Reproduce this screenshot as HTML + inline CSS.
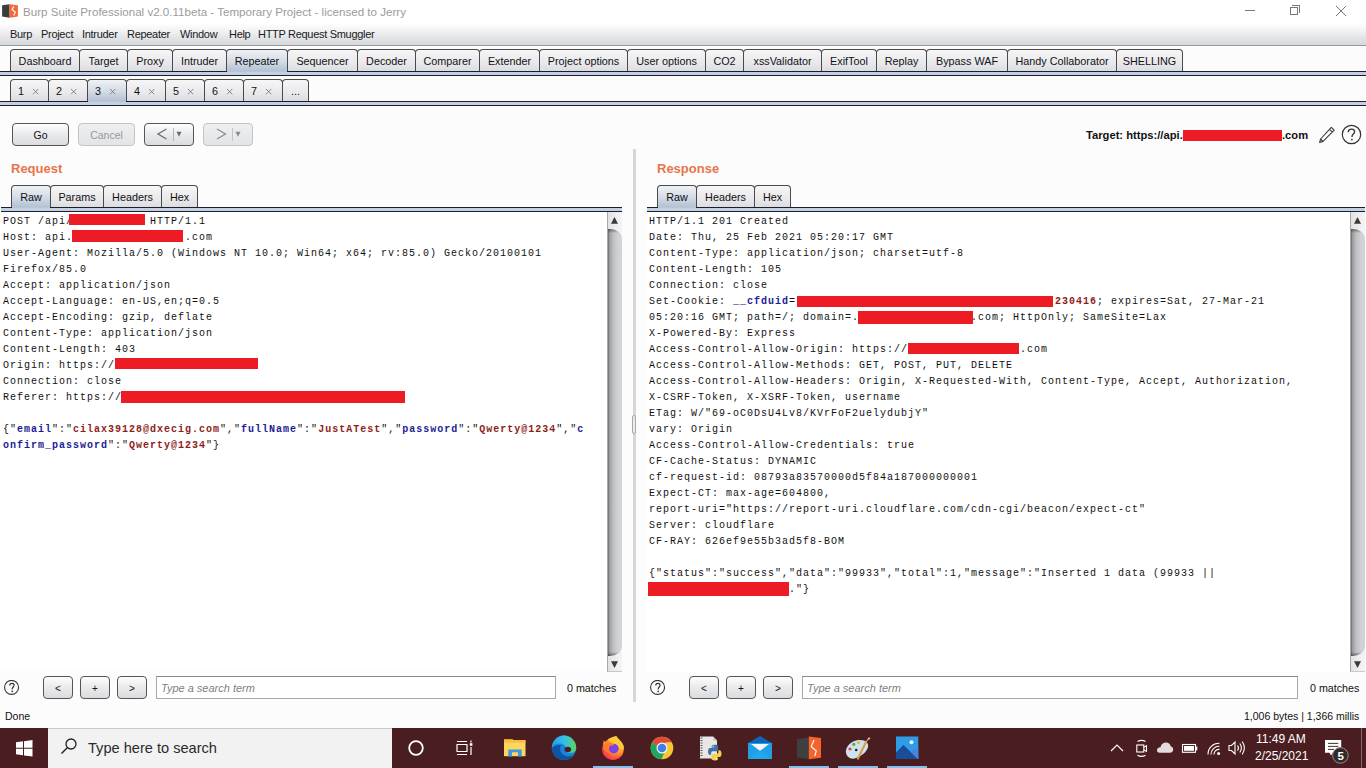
<!DOCTYPE html><html><head><meta charset="utf-8"><style>
*{box-sizing:border-box;margin:0;padding:0}
html,body{width:1366px;height:768px;overflow:hidden;background:#fcfcfc;font-family:"Liberation Sans",sans-serif;position:relative}
.a{position:absolute}
.t{position:absolute;white-space:pre;line-height:1}
#title{left:0;top:0;width:1366px;height:21px;background:#fff}
#menu{left:0;top:21px;width:1366px;height:25px;background:linear-gradient(#fff 0%,#fff 10%,#f4f5f6 35%,#e3e5e8 68%,#d5d8dd 100%);border-bottom:1px solid #9a9a9a}
.mi{position:absolute;top:28px;font-size:11px;letter-spacing:-0.3px;color:#1a1a1a;white-space:pre;line-height:12px}
.tab{position:absolute;border:1px solid #4a4a4a;border-bottom:none;border-radius:4px 4px 0 0;background:linear-gradient(#f6f6f7,#e9e9ec 60%,#dcdde1);font-size:10.8px;color:#111;text-align:center;white-space:pre}
.tab.sel{background:linear-gradient(#f0f2f5,#d3dbe5 55%,#b3c2d4);}
.band{position:absolute;left:0;width:1366px;background:#c3d0e4;border-top:1px solid #1b1f2b;border-bottom:1px solid #1b1f2b}
.btn{position:absolute;border:1px solid #555;border-radius:4px;background:linear-gradient(#fdfdfd,#e9eaec 50%,#dadcdf);font-size:10.5px;text-align:center;color:#111}
.btn.dis{border-color:#c4c4c4;background:linear-gradient(#eeeff0,#e3e4e6);color:#9a9a9a}
.mono{position:absolute;font-family:"Liberation Mono",monospace;font-size:10px;letter-spacing:1px;line-height:16px;white-space:pre;color:#111}
.red{position:absolute;background:#ed1c24}
.k{color:#1c1c94;font-weight:bold}
.v{color:#8e1d20;font-weight:bold}
</style></head><body>
<div id="title" class="a"></div>
<svg class="a" style="left:0;top:0" width="20" height="20" viewBox="0 0 20 20">
<path d="M2.1 5.2L9.6 4.3V17.7L2.1 16.5Z" fill="#3c3c3c"/><path d="M9.6 4.3L17.9 5.2V16.5L9.6 17.7Z" fill="#f2683a"/>
<path d="M14 6.3L12 9.3L15.3 12.2L13.7 15.6" stroke="#fff" stroke-width="1.2" fill="none" opacity="0.9"/></svg>
<div class="t" style="left:23px;top:6px;font-size:11.6px;color:#9b9b9b">Burp Suite Professional v2.0.11beta - Temporary Project - licensed to Jerry</div>
<div class="a" style="left:1245px;top:10px;width:10px;height:1px;background:#777"></div>
<div class="a" style="left:1290px;top:7px;width:8px;height:8px;border:1px solid #777"></div><div class="a" style="left:1292px;top:5px;width:8px;height:8px;border-top:1px solid #777;border-right:1px solid #777"></div>
<svg class="a" style="left:1335px;top:5px" width="12" height="12"><path d="M1 1L11 11M11 1L1 11" stroke="#777" stroke-width="1"/></svg>
<div id="menu" class="a"></div>
<div class="mi" style="left:10px">Burp</div>
<div class="mi" style="left:41px">Project</div>
<div class="mi" style="left:82px">Intruder</div>
<div class="mi" style="left:127px">Repeater</div>
<div class="mi" style="left:180px">Window</div>
<div class="mi" style="left:229px">Help</div>
<div class="mi" style="left:258px">HTTP Request Smuggler</div>
<div class="band" style="top:71px;height:5px"></div>
<div class="tab" style="left:10px;top:49px;width:70px;height:22px;line-height:23px;">Dashboard</div>
<div class="tab" style="left:79px;top:49px;width:49px;height:22px;line-height:23px;">Target</div>
<div class="tab" style="left:127px;top:49px;width:46px;height:22px;line-height:23px;">Proxy</div>
<div class="tab" style="left:172px;top:49px;width:55px;height:22px;line-height:23px;">Intruder</div>
<div class="tab sel" style="left:226px;top:49px;width:62px;height:22px;line-height:23px;">Repeater</div>
<div class="a" style="left:227px;top:71px;width:60px;height:1px;background:#b7c5d6"></div>
<div class="tab" style="left:287px;top:49px;width:71px;height:22px;line-height:23px;">Sequencer</div>
<div class="tab" style="left:357px;top:49px;width:59px;height:22px;line-height:23px;">Decoder</div>
<div class="tab" style="left:415px;top:49px;width:65px;height:22px;line-height:23px;">Comparer</div>
<div class="tab" style="left:479px;top:49px;width:61px;height:22px;line-height:23px;">Extender</div>
<div class="tab" style="left:539px;top:49px;width:89px;height:22px;line-height:23px;">Project options</div>
<div class="tab" style="left:627px;top:49px;width:79px;height:22px;line-height:23px;">User options</div>
<div class="tab" style="left:705px;top:49px;width:39px;height:22px;line-height:23px;">CO2</div>
<div class="tab" style="left:743px;top:49px;width:79px;height:22px;line-height:23px;">xssValidator</div>
<div class="tab" style="left:821px;top:49px;width:56px;height:22px;line-height:23px;">ExifTool</div>
<div class="tab" style="left:876px;top:49px;width:51px;height:22px;line-height:23px;">Replay</div>
<div class="tab" style="left:926px;top:49px;width:82px;height:22px;line-height:23px;">Bypass WAF</div>
<div class="tab" style="left:1007px;top:49px;width:110px;height:22px;line-height:23px;">Handy Collaborator</div>
<div class="tab" style="left:1116px;top:49px;width:67px;height:22px;line-height:23px;">SHELLING</div>
<div class="band" style="top:101px;height:5px"></div>
<div class="tab" style="left:10px;top:79px;width:39px;height:22px;line-height:23px;text-align:left;padding-left:7px">1<svg style="position:absolute;left:21.3px;top:7.9px" width="7" height="7" viewBox="0 0 7 7"><path d="M1 1L6.3 6.3M6.3 1L1 6.3" stroke="#7a7a7a" stroke-width="0.9"/></svg></div>
<div class="tab" style="left:48px;top:79px;width:40px;height:22px;line-height:23px;text-align:left;padding-left:7px">2<svg style="position:absolute;left:21.3px;top:7.9px" width="7" height="7" viewBox="0 0 7 7"><path d="M1 1L6.3 6.3M6.3 1L1 6.3" stroke="#7a7a7a" stroke-width="0.9"/></svg></div>
<div class="tab sel" style="left:87px;top:79px;width:40px;height:22px;line-height:23px;text-align:left;padding-left:7px">3<svg style="position:absolute;left:21.3px;top:7.9px" width="7" height="7" viewBox="0 0 7 7"><path d="M1 1L6.3 6.3M6.3 1L1 6.3" stroke="#7a7a7a" stroke-width="0.9"/></svg></div>
<div class="a" style="left:88px;top:101px;width:38px;height:1px;background:#b7c5d6"></div>
<div class="tab" style="left:126px;top:79px;width:40px;height:22px;line-height:23px;text-align:left;padding-left:7px">4<svg style="position:absolute;left:21.3px;top:7.9px" width="7" height="7" viewBox="0 0 7 7"><path d="M1 1L6.3 6.3M6.3 1L1 6.3" stroke="#7a7a7a" stroke-width="0.9"/></svg></div>
<div class="tab" style="left:165px;top:79px;width:40px;height:22px;line-height:23px;text-align:left;padding-left:7px">5<svg style="position:absolute;left:21.3px;top:7.9px" width="7" height="7" viewBox="0 0 7 7"><path d="M1 1L6.3 6.3M6.3 1L1 6.3" stroke="#7a7a7a" stroke-width="0.9"/></svg></div>
<div class="tab" style="left:204px;top:79px;width:40px;height:22px;line-height:23px;text-align:left;padding-left:7px">6<svg style="position:absolute;left:21.3px;top:7.9px" width="7" height="7" viewBox="0 0 7 7"><path d="M1 1L6.3 6.3M6.3 1L1 6.3" stroke="#7a7a7a" stroke-width="0.9"/></svg></div>
<div class="tab" style="left:243px;top:79px;width:40px;height:22px;line-height:23px;text-align:left;padding-left:7px">7<svg style="position:absolute;left:21.3px;top:7.9px" width="7" height="7" viewBox="0 0 7 7"><path d="M1 1L6.3 6.3M6.3 1L1 6.3" stroke="#7a7a7a" stroke-width="0.9"/></svg></div>
<div class="tab" style="left:282px;top:79px;width:27px;height:22px;line-height:23px;">...</div>
<div class="btn" style="left:12px;top:123px;width:57px;height:23px;line-height:22px">Go</div>
<div class="btn dis" style="left:78px;top:123px;width:57px;height:23px;line-height:22px">Cancel</div>
<div class="btn" style="left:144px;top:123px;width:50px;height:23px"></div>
<div class="btn dis" style="left:203px;top:123px;width:50px;height:23px"></div>
<svg class="a" style="left:144px;top:123px" width="110" height="23">
<path d="M22.5 6L14 11L22.5 16" stroke="#6e6e6e" stroke-width="1.3" fill="none"/>
<path d="M29.5 5V18" stroke="#b5b5b5" stroke-width="1"/>
<path d="M32.5 8.8H37.5L35 13.8Z" fill="#6a6a6a"/>
<path d="M73 6L81.5 11L73 16" stroke="#8f8f8f" stroke-width="1.3" fill="none"/>
<path d="M88.5 5V18" stroke="#c4c4c4" stroke-width="1"/>
<path d="M91.5 8.8H96.5L94 13.8Z" fill="#8a8a8a"/>
</svg>
<div class="t" style="left:1086px;top:130px;font-size:11.2px;font-weight:bold;color:#111">Target: https://api.</div>
<div class="red" style="left:1183px;top:130px;width:99px;height:11px"></div>
<div class="t" style="left:1282px;top:130px;font-size:11.2px;font-weight:bold;color:#111">.com</div>
<svg class="a" style="left:1318px;top:126px" width="18" height="18" viewBox="0 0 18 18">
<path d="M13.3 1.3L16.2 4.2L5 15.4L1.6 16.4L2.6 13Z M11.4 3.2L14.3 6.1 M2.6 13L5 15.4" fill="none" stroke="#3a3a3a" stroke-width="1.1" stroke-linejoin="round"/></svg>
<svg class="a" style="left:1341px;top:124px" width="21" height="21" viewBox="0 0 21 21">
<circle cx="10.5" cy="10.5" r="9.2" fill="none" stroke="#333" stroke-width="1.2"/>
<path d="M7.3 8.2C7.3 6.2 8.8 5.2 10.5 5.2C12.3 5.2 13.6 6.3 13.6 8C13.6 9.8 11.2 10.3 11 12.2V13" fill="none" stroke="#333" stroke-width="1.3"/>
<circle cx="10.9" cy="15.6" r="0.9" fill="#333"/></svg>
<div class="t" style="left:11px;top:162px;font-size:13px;font-weight:bold;color:#e8744a">Request</div>
<div class="t" style="left:657px;top:162px;font-size:13px;font-weight:bold;color:#e8744a">Response</div>
<div class="a" style="left:633px;top:149px;width:3px;height:553px;background:#d6d6d6"></div>
<div class="a" style="left:632px;top:415px;width:4px;height:19px;background:#ececec;border:1px solid #a9a9a9;border-radius:2px"></div>
<div class="band" style="left:1px;width:621px;top:207px;height:5px"></div>
<div class="tab sel" style="left:11px;top:185px;width:40px;height:22px;line-height:23px;">Raw</div>
<div class="a" style="left:12px;top:207px;width:38px;height:1px;background:#b7c5d6"></div>
<div class="tab" style="left:50px;top:185px;width:54px;height:22px;line-height:23px;">Params</div>
<div class="tab" style="left:103px;top:185px;width:59px;height:22px;line-height:23px;">Headers</div>
<div class="tab" style="left:161px;top:185px;width:37px;height:22px;line-height:23px;">Hex</div>
<div class="band" style="left:647px;width:718px;top:207px;height:5px"></div>
<div class="tab sel" style="left:657px;top:185px;width:40px;height:22px;line-height:23px;">Raw</div>
<div class="a" style="left:658px;top:207px;width:38px;height:1px;background:#b7c5d6"></div>
<div class="tab" style="left:696px;top:185px;width:59px;height:22px;line-height:23px;">Headers</div>
<div class="tab" style="left:754px;top:185px;width:37px;height:22px;line-height:23px;">Hex</div>
<div class="a" style="left:0;top:212px;width:622px;height:459px;background:#fff"></div>
<div class="a" style="left:647px;top:212px;width:718px;height:460px;background:#fff"></div>
<div class="mono" style="left:3px;top:214px">POST /api/           HTTP/1.1
Host: api.                .com
User-Agent: Mozilla/5.0 (Windows NT 10.0; Win64; x64; rv:85.0) Gecko/20100101
Firefox/85.0
Accept: application/json
Accept-Language: en-US,en;q=0.5
Accept-Encoding: gzip, deflate
Content-Type: application/json
Content-Length: 403
Origin: https://
Connection: close
Referer: https://

{"<span class="k">email</span>":"<span class="v">cilax39128@dxecig.com</span>","<span class="k">fullName</span>":"<span class="v">JustATest</span>","<span class="k">password</span>":"<span class="v">Qwerty@1234</span>","<span class="k">c</span>
<span class="k">onfirm_password</span>":"<span class="v">Qwerty@1234</span>"}</div>
<div class="red" style="left:69px;top:214px;width:76px;height:11px"></div>
<div class="red" style="left:72px;top:230px;width:111px;height:12px"></div>
<div class="red" style="left:115px;top:358px;width:143px;height:11px"></div>
<div class="red" style="left:121px;top:391px;width:284px;height:12px"></div>
<div class="mono" style="left:649px;top:214px">HTTP/1.1 201 Created
Date: Thu, 25 Feb 2021 05:20:17 GMT
Content-Type: application/json; charset=utf-8
Content-Length: 105
Connection: close
Set-Cookie: <span class="k">__cfduid</span>=                                     <span class="v">230416</span>; expires=Sat, 27-Mar-21
05:20:16 GMT; path=/; domain=.                .com; HttpOnly; SameSite=Lax
X-Powered-By: Express
Access-Control-Allow-Origin: https://                .com
Access-Control-Allow-Methods: GET, POST, PUT, DELETE
Access-Control-Allow-Headers: Origin, X-Requested-With, Content-Type, Accept, Authorization,
X-CSRF-Token, X-XSRF-Token, username
ETag: W/"69-oC0DsU4Lv8/KVrFoF2uelydubjY"
vary: Origin
Access-Control-Allow-Credentials: true
CF-Cache-Status: DYNAMIC
cf-request-id: 08793a83570000d5f84a187000000001
Expect-CT: max-age=604800,
report-uri="https://report-uri.cloudflare.com/cdn-cgi/beacon/expect-ct"
Server: cloudflare
CF-RAY: 626ef9e55b3ad5f8-BOM

{"status":"success","data":"99933","total":1,"message":"Inserted 1 data (99933 ||
                    ."}</div>
<div class="red" style="left:797px;top:296px;width:256px;height:11px"></div>
<div class="red" style="left:858px;top:311px;width:115px;height:13px"></div>
<div class="red" style="left:908px;top:343px;width:111px;height:11px"></div>
<div class="red" style="left:648px;top:582px;width:141px;height:14px"></div>
<div class="a" style="left:607px;top:212px;width:15px;height:460px;background:linear-gradient(90deg,#e2e2e2,#efefef 60%,#f4f4f4);border-left:1px solid #a8a8a8;border-bottom:1px solid #c8c8c8"></div>
<div class="a" style="left:608px;top:229px;width:14px;height:427px;border-radius:0 12px 12px 0/0 10px 10px 0;overflow:hidden;background:linear-gradient(90deg,#666 0,#9a9a9c 10%,#bdbec1 35%,#cfd1d5 70%,#d2d4d8 100%)"><div style="position:absolute;left:0;top:0;width:14px;height:4px;background:linear-gradient(rgba(40,40,40,.55),rgba(40,40,40,0))"></div><div style="position:absolute;left:0;bottom:0;width:14px;height:4px;background:linear-gradient(rgba(40,40,40,0),rgba(40,40,40,.55))"></div></div>
<svg class="a" style="left:611px;top:216px" width="8" height="9"><path d="M3.5 1L7 7.8H0Z" fill="#3a3a3a"/></svg>
<svg class="a" style="left:611px;top:661px" width="8" height="9"><path d="M0 0.2H7L3.5 7Z" fill="#3a3a3a"/></svg>
<div class="a" style="left:1350px;top:212px;width:15px;height:460px;background:linear-gradient(90deg,#e2e2e2,#efefef 60%,#f4f4f4);border-left:1px solid #a8a8a8;border-bottom:1px solid #c8c8c8"></div>
<div class="a" style="left:1351px;top:229px;width:14px;height:427px;border-radius:0 12px 12px 0/0 10px 10px 0;overflow:hidden;background:linear-gradient(90deg,#666 0,#9a9a9c 10%,#bdbec1 35%,#cfd1d5 70%,#d2d4d8 100%)"><div style="position:absolute;left:0;top:0;width:14px;height:4px;background:linear-gradient(rgba(40,40,40,.55),rgba(40,40,40,0))"></div><div style="position:absolute;left:0;bottom:0;width:14px;height:4px;background:linear-gradient(rgba(40,40,40,0),rgba(40,40,40,.55))"></div></div>
<svg class="a" style="left:1354px;top:216px" width="8" height="9"><path d="M3.5 1L7 7.8H0Z" fill="#3a3a3a"/></svg>
<svg class="a" style="left:1354px;top:661px" width="8" height="9"><path d="M0 0.2H7L3.5 7Z" fill="#3a3a3a"/></svg>
<svg class="a" style="left:4px;top:680px" width="16" height="16" viewBox="0 0 16 16"><circle cx="7.56" cy="7.4" r="7" fill="none" stroke="#333" stroke-width="1.1"/><path d="M5.7 5.6C5.7 4 6.7 3.4 8 3.4C9.3 3.4 10.1 4.2 10.1 5.3C10.1 6.8 8.4 7.1 8.2 8.7V9.5" fill="none" stroke="#333" stroke-width="1.15"/><circle cx="8.2" cy="11.3" r="0.85" fill="#333"/></svg>
<div class="btn" style="left:43px;top:676px;width:30px;height:23px;line-height:23px;font-size:10px">&lt;</div>
<div class="btn" style="left:80px;top:676px;width:30px;height:23px;line-height:23px;font-size:10px">+</div>
<div class="btn" style="left:117px;top:676px;width:30px;height:23px;line-height:23px;font-size:10px">&gt;</div>
<div class="a" style="left:156px;top:676px;width:400px;height:23px;background:#fff;border:1px solid #a9a9a9;border-top-color:#8a8a8a"></div>
<div class="t" style="left:161px;top:683px;font-size:11px;font-style:italic;color:#7f7f7f">Type a search term</div>
<div class="t" style="left:567px;top:683px;font-size:10.7px;color:#111">0 matches</div>
<svg class="a" style="left:650px;top:680px" width="16" height="16" viewBox="0 0 16 16"><circle cx="7.56" cy="7.4" r="7" fill="none" stroke="#333" stroke-width="1.1"/><path d="M5.7 5.6C5.7 4 6.7 3.4 8 3.4C9.3 3.4 10.1 4.2 10.1 5.3C10.1 6.8 8.4 7.1 8.2 8.7V9.5" fill="none" stroke="#333" stroke-width="1.15"/><circle cx="8.2" cy="11.3" r="0.85" fill="#333"/></svg>
<div class="btn" style="left:689px;top:676px;width:30px;height:23px;line-height:23px;font-size:10px">&lt;</div>
<div class="btn" style="left:726px;top:676px;width:30px;height:23px;line-height:23px;font-size:10px">+</div>
<div class="btn" style="left:763px;top:676px;width:30px;height:23px;line-height:23px;font-size:10px">&gt;</div>
<div class="a" style="left:802px;top:676px;width:496px;height:23px;background:#fff;border:1px solid #a9a9a9;border-top-color:#8a8a8a"></div>
<div class="t" style="left:807px;top:683px;font-size:11px;font-style:italic;color:#7f7f7f">Type a search term</div>
<div class="t" style="left:1310px;top:683px;font-size:10.7px;color:#111">0 matches</div>
<div class="t" style="left:5px;top:711px;font-size:10.5px;color:#111">Done</div>
<div class="t" style="left:1244px;top:711px;font-size:10.5px;color:#111">1,006 bytes | 1,366 millis</div>
<div class="a" style="left:0;top:728px;width:1366px;height:40px;background:#4a1e21"></div>
<svg class="a" style="left:16px;top:740px" width="17" height="17"><path d="M0 2.3L7 1.3V7.8H0Z M8 1.2L16.5 0V7.8H8Z M0 8.8H7V15.3L0 14.3Z M8 8.8H16.5V16.5L8 15.4Z" fill="#fff"/></svg>
<div class="a" style="left:48px;top:728px;width:344px;height:40px;background:#f2f2f2;border-top:1px solid #c8c8c8"></div>
<svg class="a" style="left:60px;top:737px" width="18" height="18"><circle cx="11" cy="7" r="5" fill="none" stroke="#222" stroke-width="1.3"/><path d="M7.3 10.7L1.5 16.5" stroke="#222" stroke-width="1.4"/></svg>
<div class="t" style="left:88px;top:741px;font-size:14.6px;color:#2b2b2b">Type here to search</div>
<svg class="a" style="left:0;top:728px" width="1366" height="40" viewBox="0 728 1366 40">
<defs>
<linearGradient id="edg" x1="0" y1="1" x2="1" y2="0"><stop offset="0" stop-color="#0b4f9c"/><stop offset="0.45" stop-color="#1b8fe0"/><stop offset="0.7" stop-color="#2fb8ea"/><stop offset="1" stop-color="#56d35a"/></linearGradient>
<linearGradient id="edg2" x1="0" y1="0.5" x2="1" y2="0.5"><stop offset="0" stop-color="#2a9ae8"/><stop offset="0.5" stop-color="#33c0ea"/><stop offset="1" stop-color="#5bd35a"/></linearGradient>
<radialGradient id="ffx" cx="0.7" cy="0.25" r="0.95"><stop offset="0" stop-color="#ffe14a"/><stop offset="0.4" stop-color="#ffa02a"/><stop offset="0.7" stop-color="#ff5040"/><stop offset="1" stop-color="#e8206a"/></radialGradient>
<linearGradient id="ph" x1="0" y1="0" x2="0" y2="1"><stop offset="0" stop-color="#2aa4ec"/><stop offset="1" stop-color="#4aa0e8"/></linearGradient>
</defs>
<!-- cortana -->
<circle cx="416" cy="748" r="6.8" fill="none" stroke="#fff" stroke-width="1.8"/>
<!-- task view -->
<g fill="none" stroke="#fff" stroke-width="1.2">
<path d="M457 741.5H467 M457 754.5H467 M457 744.5V751.5 M467 744.5V751.5 M456.5 744.5H467.5 M456.5 751.5H467.5"/>
<path d="M471 740.5V742.5 M471 747V755"/></g>
<rect x="469.8" y="743.2" width="2.6" height="2.6" fill="#fff"/>
<!-- folder -->
<path d="M504 739H512.5L514 740.5H504Z" fill="#e7a21a"/>
<rect x="504" y="740.2" width="21.5" height="16" fill="#ffd55f"/>
<rect x="504" y="740.2" width="21.5" height="2.5" fill="#f6c03c"/>
<path d="M508.3 756.5V749.5H521.7V756.5H518V752.3H512V756.5Z" fill="#3d9be0"/>
<!-- edge -->
<circle cx="564" cy="747.8" r="12.2" fill="#1a84d8"/>
<path d="M551.8 747.8A12.2 12.2 0 0 1 576.2 747.8C576.2 751 574 753 571 753C568 753 566 751 566 748.5C566 745.5 563 743.5 559.5 743.5C555.5 743.5 552.5 745.5 551.8 747.8Z" fill="url(#edg2)"/>
<path d="M551.8 748.5C552.5 754.5 557.5 760 564 760C568 760 571.5 758 573.5 755.5C570 757 565 756.5 562 753.5C559.5 751 559.5 747 561.5 744.8C557 745 552.5 746.5 551.8 748.5Z" fill="#0c55a2"/>
<ellipse cx="567.8" cy="749.4" rx="3.3" ry="2.7" fill="#4a1e21"/>
<!-- firefox -->
<circle cx="613" cy="749.2" r="10.8" fill="url(#ffx)"/>
<path d="M607.5 739.5C610 737.8 614 736.5 616.3 735.8C617.5 738.5 621.5 740.5 623.5 745.5C624 747.5 623.8 749 623.8 749.5L617 746Z" fill="#ffc93a"/>
<path d="M602.8 745L603.8 740.2L605.8 742.8L607.2 739.8L610 743.5Z" fill="#ff8f1f"/>
<circle cx="613.8" cy="748.6" r="4.9" fill="#7b42e6"/>
<path d="M603 747C604.5 743 608.5 741.8 611.5 742.8C613.5 743.5 614 745 613.5 746C611 745 609 745.8 608.5 748C608 750.5 610 752.5 612 753.3C608 753.8 604 751.5 603 747Z" fill="#ff7a2a"/>
<rect x="593" y="766" width="40" height="2" fill="#84bff0"/>
<!-- chrome -->
<circle cx="662" cy="748" r="11.3" fill="#fbc634"/>
<path d="M657 746L652.3 742.2A11.3 11.3 0 0 1 671.76 742.3L666.5 742.3Z" fill="#e2493a"/>
<path d="M657 746L652.3 742.2A11.3 11.3 0 0 0 661.5 759.3L664.5 752Z" fill="#1fa463"/>
<circle cx="662" cy="748" r="5.5" fill="#f4f8fb"/>
<circle cx="662" cy="748" r="4.3" fill="#3f82e6"/>
<!-- python file -->
<path d="M700 736.5H713L717 740.5V758.5H700Z" fill="#ebe6e6"/>
<path d="M713 736.5V740.5H717Z" fill="#cfc9c9"/>
<g stroke="#555" stroke-width="1"><path d="M700.5 738H702.5M700.5 740.5H702.5M700.5 743H702.5M700.5 745.5H702.5M700.5 748H702.5M700.5 750.5H702.5M700.5 753H702.5M700.5 755.5H702.5"/></g>
<g transform="translate(705.8,743.6) scale(1.12)">
<path d="M8 1C5 1 5.2 2.3 5.2 2.3V3.6H8.1V4H4C4 4 2 3.8 2 7C2 10.2 3.8 10 3.8 10H4.8V8.5C4.8 8.5 4.7 6.8 6.5 6.8H9.4C9.4 6.8 11 6.8 11 5.2V2.6C11 2.6 11.3 1 8 1Z" fill="#3c73a8"/>
<path d="M8 15C11 15 10.8 13.7 10.8 13.7V12.4H7.9V12H12C12 12 14 12.2 14 9C14 5.8 12.2 6 12.2 6H11.2V7.5C11.2 7.5 11.3 9.2 9.5 9.2H6.6C6.6 9.2 5 9.2 5 10.8V13.4C5 13.4 4.7 15 8 15Z" fill="#f7d04a"/>
<circle cx="6.6" cy="2.3" r="0.6" fill="#fff"/><circle cx="9.4" cy="13.7" r="0.6" fill="#fff"/>
</g>
<!-- mail -->
<rect x="748" y="743" width="24" height="16" fill="#1f9fe6"/>
<path d="M748 743L760 736L772 743Z" fill="#0e64b8"/>
<path d="M751 744H769L760 751Z" fill="#f1f6fb"/>
<path d="M748 759L760 750L772 759Z" fill="#27aef0" opacity="0.6"/>
<rect x="789" y="766" width="40" height="2" fill="#84bff0"/>
<!-- burp -->
<path d="M797 739L808.8 737.5V759L797 757.5Z" fill="#3f3f3f"/>
<path d="M808.8 736.5L821 738V757.8L808.8 759.2Z" fill="#f5652b"/>
<path d="M814 740L811.2 746.5L816.3 751L814.8 756" fill="none" stroke="#fff" stroke-width="1.1"/>
<rect x="838" y="766" width="40" height="2" fill="#84bff0"/>
<!-- paint -->
<path d="M846 753C845 748 850 741 858 740C865 739.2 869 742.5 868 747C867 752 861 756 856 758C851 760 847 757 846 753Z" fill="#cfe2f0"/>
<circle cx="850" cy="749" r="1.6" fill="#e04a3a"/>
<circle cx="853.8" cy="744.3" r="1.6" fill="#4cb050"/>
<circle cx="858.5" cy="742.6" r="1.6" fill="#f2b52a"/>
<circle cx="856.2" cy="750" r="1.3" fill="#222"/>
<path d="M857.5 759.5L866.5 741" stroke="#d99a4a" stroke-width="2"/>
<path d="M865.5 742L869 737L870.5 738.5Z" fill="#e8c08a"/>
<!-- photos -->
<rect x="896" y="736.5" width="22.3" height="22.4" fill="#2f9ce8"/>
<path d="M896 752.5L903.5 745L911 751.5L918.3 747.5V758.9H896Z" fill="#4a82dc"/>
<path d="M896 752.5L903.5 745L917.5 758.9H896Z" fill="#1b4c96"/>
<circle cx="911.5" cy="742.3" r="2" fill="#e8f4ff"/>
<rect x="887" y="766" width="40" height="2" fill="#84bff0"/>
<!-- tray -->
<path d="M1111 751L1117 745L1123 751" fill="none" stroke="#fff" stroke-width="1.2"/>
<g fill="none" stroke="#fff" stroke-width="1.1">
<rect x="1136.8" y="745" width="7" height="7"/>
<path d="M1143.8 747.2L1146.5 745.6V751.4L1143.8 749.8"/>
<path d="M1137.5 741.5Q1141.5 739.3 1145.5 741.5 M1137.5 755.3Q1141.5 757.5 1145.5 755.3"/></g>
<path d="M1157 750.5C1157 748 1159 747 1160.5 747.2C1161 744.2 1163.5 742.6 1166 742.6C1168.5 742.6 1170.3 744.2 1170.8 746.5C1172.3 746.6 1173.2 748 1173.2 749.5C1173.2 751.3 1172 752.7 1170 752.7H1159.5C1158 752.7 1157 751.8 1157 750.5Z" fill="#e3dcdc"/>
<rect x="1182.5" y="744.5" width="13" height="7.8" fill="none" stroke="#fff" stroke-width="1.1"/>
<rect x="1184" y="746" width="10" height="4.8" fill="#fff"/>
<rect x="1196" y="746.5" width="1.3" height="3.8" fill="#fff"/>
<g fill="none" stroke="#fff" stroke-width="1.1">
<path d="M1208 754.5A11 11 0 0 1 1219.5 743.2"/>
<path d="M1211 754.5A8 8 0 0 1 1219.5 746.3"/>
<path d="M1214 754.5A5 5 0 0 1 1219.5 749.4"/></g>
<circle cx="1218.6" cy="753.6" r="1.5" fill="#fff"/>
<g fill="none" stroke="#fff" stroke-width="1.1">
<path d="M1229 745.5H1231.5L1235 742V754L1231.5 750.5H1229Z"/>
<path d="M1237.5 745.5Q1239.5 748 1237.5 750.5"/>
<path d="M1239.8 743.5Q1243 748 1239.8 752.5"/>
<path d="M1242.2 741.5Q1246.5 748 1242.2 754.5"/></g>
<!-- notification -->
<path d="M1325 740H1341.2V752.8H1333L1331 755.5L1329.5 752.8H1325Z" fill="#fff"/>
<path d="M1328 743.4H1338.3M1328 746.4H1338.3M1328 749.4H1334" stroke="#2a1a1c" stroke-width="0.9"/>
<circle cx="1340.4" cy="755.4" r="7.8" fill="#2c2c2c" stroke="#a88689" stroke-width="1"/>
<text x="1340.6" y="759.6" font-family="Liberation Sans" font-size="11.5" font-weight="bold" fill="#fff" text-anchor="middle">5</text>
<rect x="1361" y="728" width="1" height="40" fill="#8a6468"/>
</svg>
<div class="t" style="left:1256px;top:733px;font-size:12px;color:#fff">11:49 AM</div>
<div class="t" style="left:1255px;top:750px;font-size:12px;color:#fff">2/25/2021</div>

</body></html>
